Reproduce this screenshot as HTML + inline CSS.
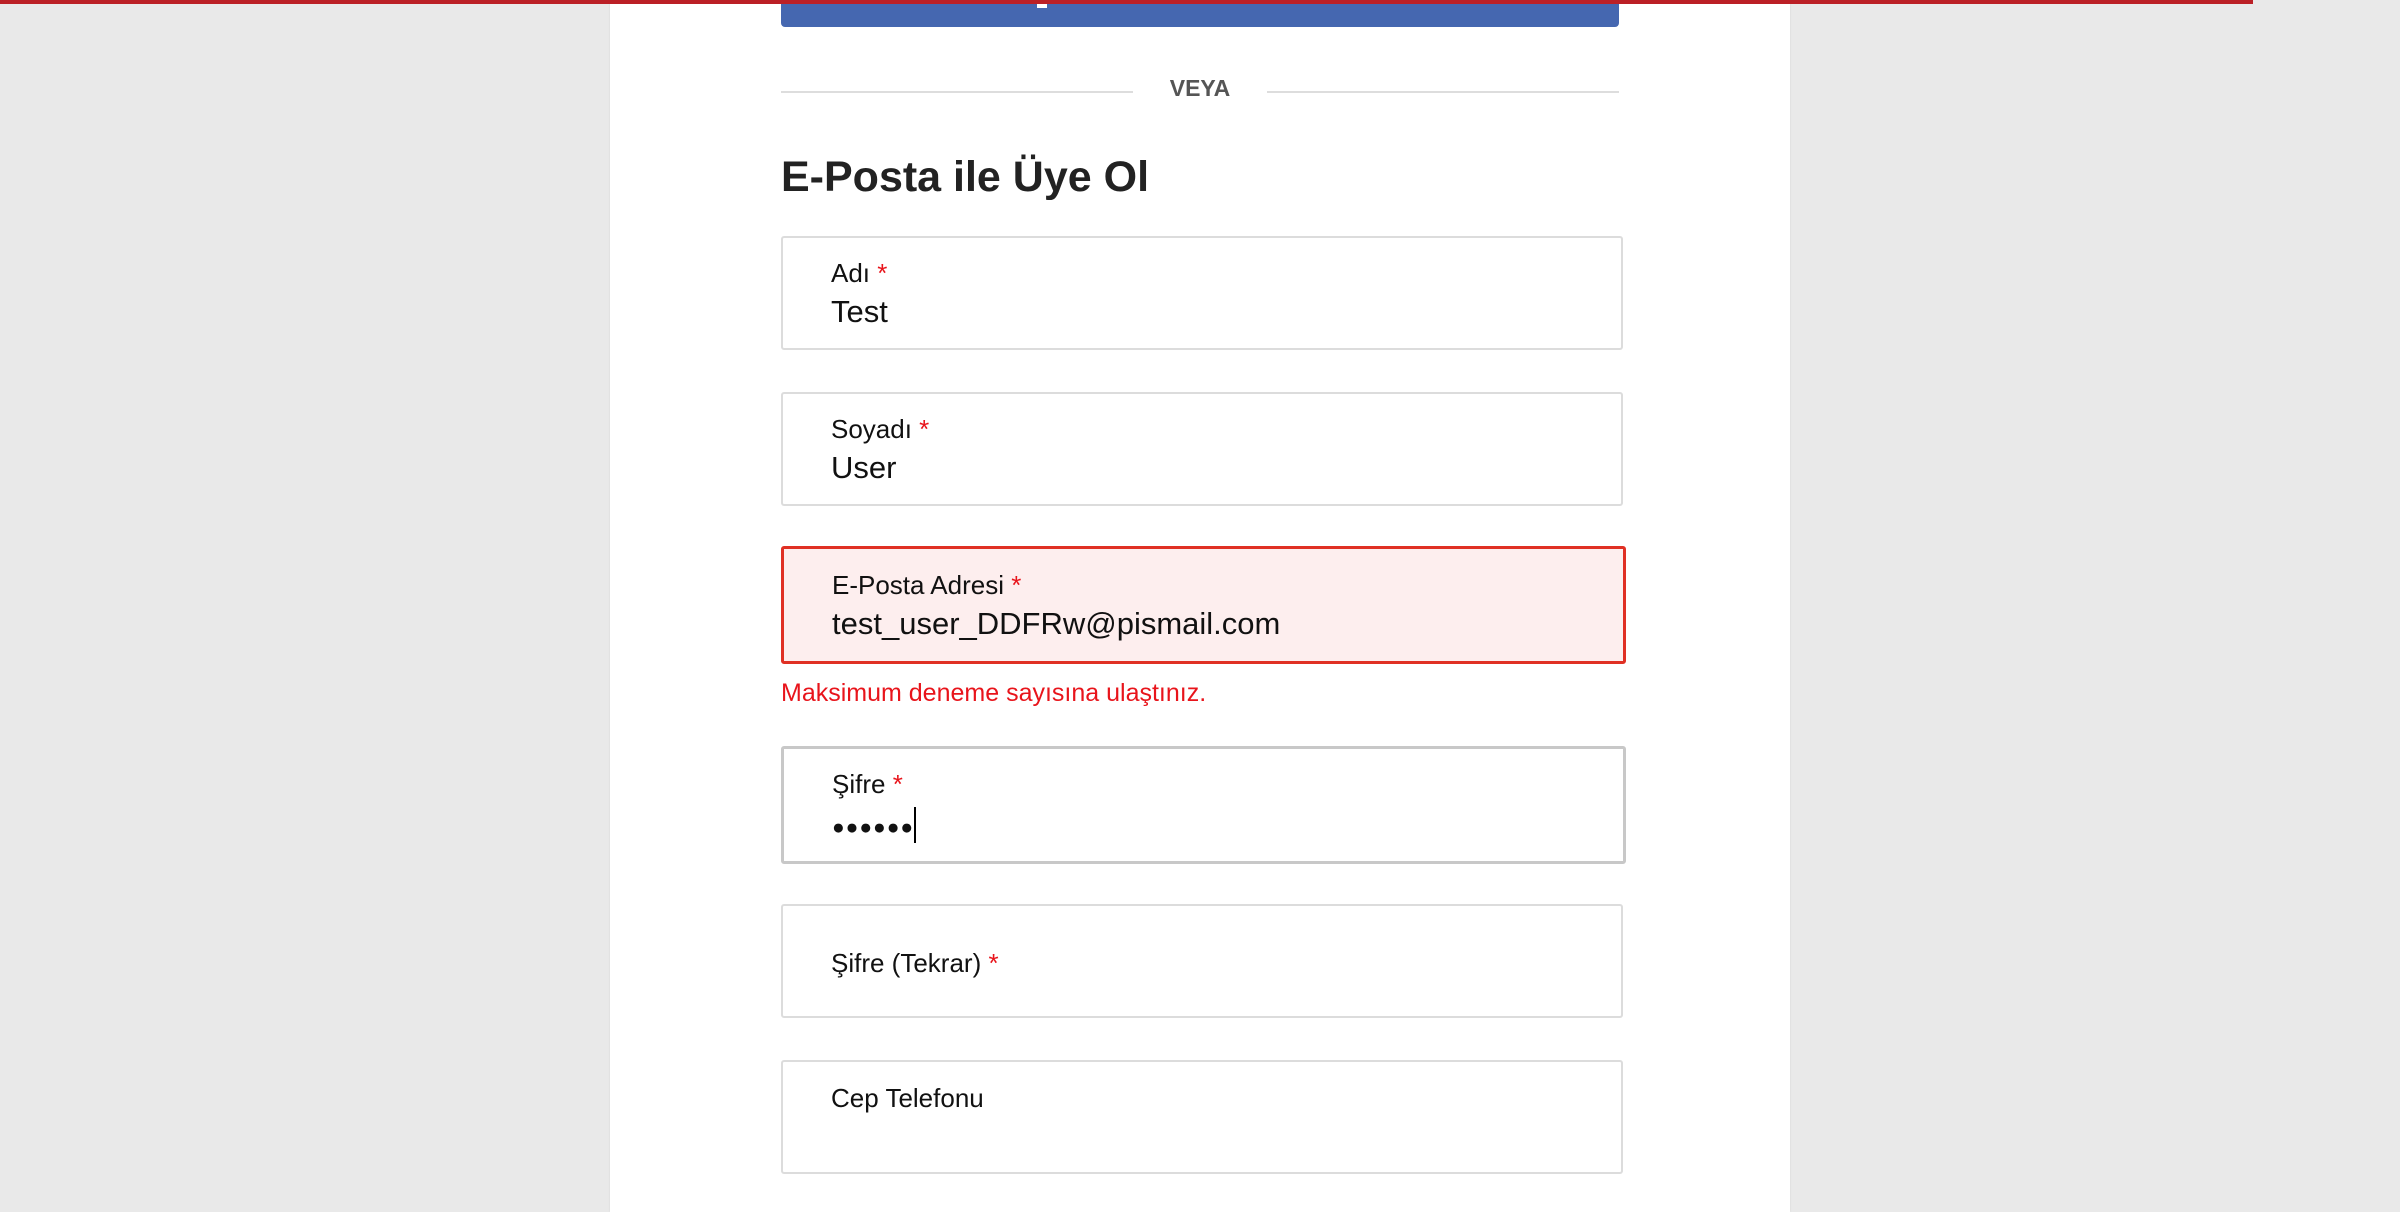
<!DOCTYPE html>
<html><head><meta charset="utf-8"><style>
html,body{margin:0;padding:0;width:2400px;height:1212px;overflow:hidden;background:#e9e9e9;font-family:"Liberation Sans",Arial,sans-serif;}
.panel{position:absolute;left:610px;top:0;width:1180px;height:1212px;background:#fff;box-shadow:0 0 2px #d6d6d6;}
.red{position:absolute;left:0;top:0;width:2253px;height:4px;background:#bb2026;z-index:5}
.fb{position:absolute;left:781px;top:0;width:838px;height:27px;background:#4567b0;border-radius:0 0 4px 4px}
.mark{position:absolute;left:1037px;top:4px;width:10px;height:4px;background:#fff}
.line{position:absolute;top:91px;height:2px;background:#ddd}
.veya{position:absolute;left:1100px;width:200px;text-align:center;top:75px;font-size:23px;font-weight:bold;color:#555}
h1{position:absolute;left:781px;top:153px;margin:0;font-size:43px;font-weight:bold;color:#222}
.f{position:absolute;left:781px;width:838px;height:110px;border:2px solid #dcdcdc;border-radius:3px;box-sizing:content-box;background:#fff}
.f .l{position:absolute;left:48px;font-size:26px;color:#111}
.f .v{position:absolute;left:48px;font-size:31px;color:#111}
.s{color:#e8141b}
.err{position:absolute;left:781px;top:679px;font-size:25px;color:#e8141b}
</style></head><body>
<div class="red"></div>
<div class="panel"></div>
<div class="fb"></div><div class="mark"></div>
<div class="line" style="left:781px;width:352px"></div>
<div class="line" style="left:1267px;width:352px"></div>
<div class="veya">VEYA</div>
<h1>E-Posta ile Üye Ol</h1>

<div class="f" style="top:236px"><div class="l" style="top:20px">Adı <span class="s">*</span></div><div class="v" style="top:56px">Test</div></div>
<div class="f" style="top:392px"><div class="l" style="top:20px">Soyadı <span class="s">*</span></div><div class="v" style="top:56px">User</div></div>
<div class="f" style="top:546px;width:839px;height:112px;border:3px solid #e03024;background:#fdeeee"><div class="l" style="top:21px">E-Posta Adresi <span class="s">*</span></div><div class="v" style="top:57px">test_user_DDFRw@pismail.com</div></div>
<div class="err">Maksimum deneme sayısına ulaştınız.</div>
<div class="f" style="top:746px;width:839px;height:112px;border:3px solid #c8c8c8"><div class="l" style="top:20px">Şifre <span class="s">*</span></div><div class="v" style="top:58px;font-size:21px;letter-spacing:1px">●●●●●●<span style="display:inline-block;width:2px;height:36px;background:#000;vertical-align:-9px;margin-left:0px"></span></div></div>
<div class="f" style="top:904px"><div class="l" style="top:42px">Şifre (Tekrar) <span class="s">*</span></div></div>
<div class="f" style="top:1060px"><div class="l" style="top:21px">Cep Telefonu</div></div>
</body></html>
